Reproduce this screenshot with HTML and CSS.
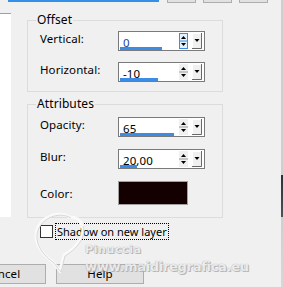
FILE: index.html
```html
<!DOCTYPE html>
<html lang="en">
  <head>
    <meta charset="UTF-8" />
    <title>Drop Shadow</title>
    <link rel="stylesheet" href="styles.css">
  </head>
  <body>
    <div class="page">
      <!-- top strip (cut off) -->
      <div class="topbar">
        <div class="field"></div>
        <div class="tbtn"></div>
        <div class="tbtn"></div>
        <div class="tbtn"></div>
      </div>

      <div class="main">
        <div class="side"></div>
        <div class="dialog">
          <fieldset class="group group-offset">
            <legend>Offset</legend>
            <div class="row">
              <label>Vertical:</label>
              <div class="spin">
                <div class="value value-focus">0<span class="bar" style="width: 42px"></span></div>
                <svg class="arrows" width="24" height="16" viewBox="0 0 24 16">
                  <rect x="0.5" y="0.5" width="8" height="15" fill="#e5f1fb" stroke="#3c8ce6" />
                  <line x1="0" y1="8" x2="9" y2="8" stroke="#3c8ce6" />
                  <polygon points="2,6 7,6 4.5,3" fill="#000" />
                  <polygon points="2,10 7,10 4.5,13" fill="#000" />
                  <rect x="13" y="0" width="10" height="16" fill="#f0f0f0" />
                  <path d="M13.5 15.5 V0.5 H22.5" stroke="#fff" fill="none" />
                  <path d="M13 15.5 H22.5 V0" stroke="#696969" fill="none" />
                  <polygon points="15.5,6 20.5,6 18,9" fill="#000" />
                </svg>
              </div>
            </div>
            <div class="row">
              <label>Horizontal:</label>
              <div class="spin">
                <div class="value">-10<span class="bar" style="width: 38px"></span></div>
                <svg class="arrows" width="24" height="16" viewBox="0 0 24 16">
                  <rect x="0" y="0" width="9" height="16" fill="#f0f0f0" />
                  <line x1="0" y1="8" x2="9" y2="8" stroke="#9a9a9a" />
                  <polygon points="2,6 7,6 4.5,3" fill="#000" />
                  <polygon points="2,10 7,10 4.5,13" fill="#000" />
                  <rect x="13" y="0" width="10" height="16" fill="#f0f0f0" />
                  <path d="M13.5 15.5 V0.5 H22.5" stroke="#fff" fill="none" />
                  <path d="M13 15.5 H22.5 V0" stroke="#696969" fill="none" />
                  <polygon points="15.5,6 20.5,6 18,9" fill="#000" />
                </svg>
              </div>
            </div>
          </fieldset>

          <fieldset class="group group-attr">
            <legend>Attributes</legend>
            <div class="row">
              <label>Opacity:</label>
              <div class="spin">
                <div class="value">65<span class="bar" style="width: 54px"></span></div>
                <svg class="arrows" width="24" height="16" viewBox="0 0 24 16">
                  <rect x="0" y="0" width="9" height="16" fill="#f0f0f0" />
                  <line x1="0" y1="8" x2="9" y2="8" stroke="#9a9a9a" />
                  <polygon points="2,6 7,6 4.5,3" fill="#000" />
                  <polygon points="2,10 7,10 4.5,13" fill="#000" />
                  <rect x="13" y="0" width="10" height="16" fill="#f0f0f0" />
                  <path d="M13.5 15.5 V0.5 H22.5" stroke="#fff" fill="none" />
                  <path d="M13 15.5 H22.5 V0" stroke="#696969" fill="none" />
                  <polygon points="15.5,6 20.5,6 18,9" fill="#000" />
                </svg>
              </div>
            </div>
            <div class="row">
              <label>Blur:</label>
              <div class="spin">
                <div class="value">20,00<span class="bar" style="width: 17px"></span></div>
                <svg class="arrows" width="24" height="16" viewBox="0 0 24 16">
                  <rect x="0" y="0" width="9" height="16" fill="#f0f0f0" />
                  <line x1="0" y1="8" x2="9" y2="8" stroke="#9a9a9a" />
                  <polygon points="2,6 7,6 4.5,3" fill="#000" />
                  <polygon points="2,10 7,10 4.5,13" fill="#000" />
                  <rect x="13" y="0" width="10" height="16" fill="#f0f0f0" />
                  <path d="M13.5 15.5 V0.5 H22.5" stroke="#fff" fill="none" />
                  <path d="M13 15.5 H22.5 V0" stroke="#696969" fill="none" />
                  <polygon points="15.5,6 20.5,6 18,9" fill="#000" />
                </svg>
              </div>
            </div>
            <div class="row row-color">
              <label>Color:</label>
              <div class="swatch"></div>
            </div>
          </fieldset>

          <div class="check-row">
            <span class="checkbox"></span>
            <span class="check-label">Shadow on new layer</span>
          </div>
        </div>
      </div>

      <div class="buttons">
        <div class="btn">Cancel</div>
        <div class="btn">Help</div>
      </div>

      <!-- watermark over the dialog -->
      <div class="watermark">
        <svg class="wm-logo" width="60" height="62" viewBox="0 0 60 62">
          <path d="M40 6 C30 0 14 4 8 16 C2 28 10 42 22 50 L30 60 L34 44 C44 38 56 26 52 14 C50 8 46 6 40 6 Z" fill="none" stroke="#fafafa" stroke-width="3" />
          <path d="M41 7 C31 1 15 5 9 17 C3 29 11 43 23 51 L31 61 L35 45 C45 39 57 27 53 15" fill="none" stroke="#d6d6d6" stroke-width="1" />
        </svg>
        <div class="wm-name">Pinuccia</div>
        <div class="wm-site">www.maidiregrafica.eu</div>
      </div>
    </div>
    <div class="edge"></div>
  </body>
</html>
```

FILE: styles.css
```css
html, body {
  margin: 0;
  height: 100%;
}
body {
  display: flex;
  background-color: #f0f0f0;
  font-family: "Noto Sans", "Open Sans", sans-serif;
  font-size: 11px;
  letter-spacing: 0.1px;
  color: #000;
  overflow: hidden;
}
.page {
  position: relative;
  flex: 1;
  display: flex;
  flex-direction: column;
}
.edge {
  width: 2px;
  background: linear-gradient(#cfcfcf 0, #cfcfcf 175px, #2f2f38 175px, #50505a 217px, #cfcfcf 217px, #d8d8d8 100%);
}

/* top strip */
.topbar {
  display: flex;
  height: 3px;
}
.field {
  width: 151px;
  height: 2px;
  margin-left: 8px;
  background: #3390e8;
}
.tbtn {
  width: 27px;
  height: 2px;
  margin-left: 7px;
  background: #e1e1e1;
  border: 1px solid #adadad;
  border-top: none;
}
.field + .tbtn {
  margin-left: 8px;
}

/* main area */
.main {
  display: flex;
  margin-top: 10px;
}
.side {
  width: 11px;
  height: 203px;
  background: #fff;
  border-top: 1px solid #a0a0a0;
}
.dialog {
  margin-left: 16px;
  display: flex;
  flex-direction: column;
}
.group {
  width: 170px;
  margin: 0;
  padding: 4px 12px 9px 12px;
  border: 1px solid #dcdcdc;
}
.group legend {
  padding: 0 1px;
  margin-left: -4px;
  font-size: 12px;
  line-height: 14px;
}
.group-attr {
  margin-top: 5px;
  padding-top: 6px;
  padding-bottom: 12px;
}
.row {
  display: flex;
  align-items: center;
  height: 20px;
}
.row + .row {
  margin-top: 11px;
}
.group-attr .row + .row {
  margin-top: 12px;
}
.group-attr .row-color {
  margin-top: 11px;
  height: 24px;
}
.row label {
  width: 78px;
  margin-top: -5px;
  font-size: 11.5px;
}
.row-color label {
  margin-top: 0;
}

/* spin field */
.spin {
  display: flex;
  align-items: center;
  width: 85px;
  height: 18px;
  background: #fff;
  border: 1px solid #7a7a7a;
}
.value {
  position: relative;
  flex: 1;
  height: 18px;
  padding-left: 4px;
  font-size: 11.5px;
  line-height: 22px;
  box-sizing: border-box;
}
.value-focus {
  color: #17479a;
}
.bar {
  position: absolute;
  left: 1px;
  bottom: 0;
  height: 3px;
  background: #3c8ce6;
}
.arrows {
  display: block;
  margin-right: 1px;
}
.swatch {
  width: 68px;
  height: 22px;
  background: #140000;
  border: 1px solid #a0a0a0;
}

/* checkbox */
.check-row {
  display: flex;
  align-items: center;
  margin-top: 5px;
  margin-left: 13px;
  height: 17px;
}
.checkbox {
  width: 11px;
  height: 11px;
  background: #fff;
  border: 1px solid #333;
}
.check-label {
  margin-left: 2px;
  padding: 0 1px;
  font-size: 11px;
  letter-spacing: 0;
  line-height: 15px;
  border: 1px dotted #000;
}

/* bottom buttons */
.buttons {
  display: flex;
  margin-top: 24px;
  margin-left: -42px;
}
.btn {
  width: 86px;
  height: 18px;
  margin-right: 10px;
  background: #e1e1e1;
  border: 1px solid #adadad;
  font-size: 11.5px;
  text-align: center;
  line-height: 18px;
}

/* watermark */
.watermark {
  position: absolute;
  left: 30px;
  top: 211px;
  pointer-events: none;
}
.wm-logo {
  display: block;
}
.wm-name,
.wm-site {
  position: absolute;
  left: 55px;
  font-family: "DejaVu Sans", sans-serif;
  font-weight: bold;
  color: #ececec;
  text-shadow: 0 0 1px #8c8c8c, 1px 1px 0 #b0b0b0;
  opacity: 0.85;
}
.wm-name {
  top: 32px;
  font-size: 11px;
  letter-spacing: 0.6px;
}
.wm-site {
  top: 48px;
  font-size: 13px;
  letter-spacing: -0.3px;
}
```
